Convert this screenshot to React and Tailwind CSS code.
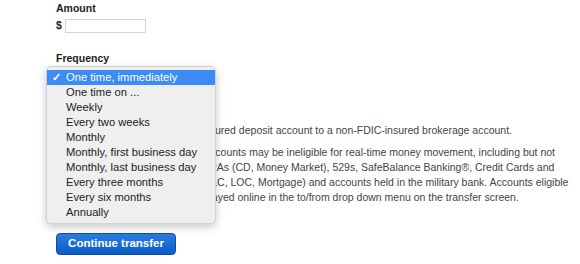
import React from "react";

const options = [
  "One time, immediately",
  "One time on ...",
  "Weekly",
  "Every two weeks",
  "Monthly",
  "Monthly, first business day",
  "Monthly, last business day",
  "Every three months",
  "Every six months",
  "Annually",
];

const App = () => {
  const selected = 0;

  return (
    <div
      className="relative w-[580px] h-[264px] bg-white overflow-hidden text-[#333]"
      style={{ fontFamily: '"Liberation Sans", Arial, sans-serif' }}
    >
      <div className="pl-[56px] pt-[1px]">
        {/* Amount */}
        <div className="text-[10.5px] font-bold leading-[14px] text-[#222]">Amount</div>
        <div className="mt-[4px] h-[14px] flex items-center gap-[3px]">
          <span className="text-[10.5px] font-bold text-[#222]">$</span>
          <input
            type="text"
            className="w-[81px] h-[14px] border border-[#d6d6d6] bg-white outline-none"
          />
        </div>

        {/* Frequency */}
        <div className="mt-[18px] text-[10.5px] font-bold leading-[14px] text-[#222]">
          Frequency
        </div>
        <div className="h-[58px]" />

        {/* Notes (partly under the open menu) */}
        <div className="text-[10.5px] leading-[15px] text-[#444] whitespace-nowrap">
          <div>You cannot transfer from FDIC-insured deposit account to a non-FDIC-insured brokerage account.</div>
          <div className="mt-[7px]">Please note that few brokerage accounts may be ineligible for real-time money movement, including but not</div>
          <div>limited to Wells Fargo Bank, NA IRAs (CD, Money Market), 529s, SafeBalance Banking®, Credit Cards and</div>
          <div>the lines of credit (PLC, PMA, HELC, LOC, Mortgage) and accounts held in the military bank. Accounts eligible</div>
          <div>for real-time transfers are all displayed online in the to/from drop down menu on the transfer screen.</div>
        </div>

        <button className="mt-[28px] w-[120px] h-[22px] rounded-[4px] bg-gradient-to-b from-[#2a7de0] to-[#0a5ac8] border border-[#0b4fa8] text-white text-[11.5px] font-bold">
          Continue transfer
        </button>
      </div>

      {/* Open frequency menu */}
      <div className="absolute left-[46px] top-[66px] w-[170px] py-[3px] rounded-[5px] bg-[#efefef] border border-[#d2d2d2] shadow-[0_3px_8px_rgba(0,0,0,0.22)]">
        {options.map((opt, i) => (
          <div
            key={opt}
            className={
              i === selected
                ? "relative h-[15px] pl-[19px] text-[11.2px] leading-[15px] bg-[#3d8bf5] text-white"
                : "relative h-[15px] pl-[19px] text-[11.2px] leading-[15px] text-[#222]"
            }
          >
            {i === selected && (
              <span className="absolute left-[5px] top-0 text-[11px] font-bold">✓</span>
            )}
            {opt}
          </div>
        ))}
      </div>
    </div>
  );
};

export default App;
